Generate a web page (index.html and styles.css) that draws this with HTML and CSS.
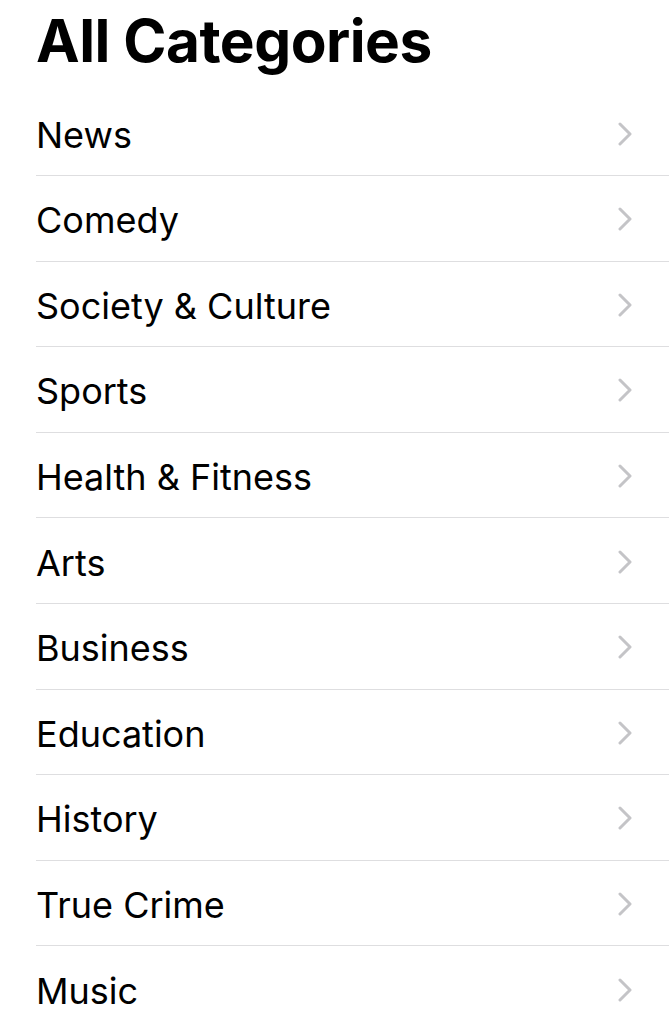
FILE: index.html
```html
<!DOCTYPE html>
<html>
<head>
    <title>All Categories</title>
    <link rel="stylesheet" href="styles.css">
</head>
<body>
    <div class="page">
        <h1 class="title">All Categories</h1>
        <ul class="category-list">
            <li class="category-item"><span>News</span><svg class="chevron" viewBox="0 0 14 24"><path d="M2 2 L12 12 L2 22"/></svg></li>
            <li class="category-item"><span>Comedy</span><svg class="chevron" viewBox="0 0 14 24"><path d="M2 2 L12 12 L2 22"/></svg></li>
            <li class="category-item"><span>Society &amp; Culture</span><svg class="chevron" viewBox="0 0 14 24"><path d="M2 2 L12 12 L2 22"/></svg></li>
            <li class="category-item"><span>Sports</span><svg class="chevron" viewBox="0 0 14 24"><path d="M2 2 L12 12 L2 22"/></svg></li>
            <li class="category-item"><span>Health &amp; Fitness</span><svg class="chevron" viewBox="0 0 14 24"><path d="M2 2 L12 12 L2 22"/></svg></li>
            <li class="category-item"><span>Arts</span><svg class="chevron" viewBox="0 0 14 24"><path d="M2 2 L12 12 L2 22"/></svg></li>
            <li class="category-item"><span>Business</span><svg class="chevron" viewBox="0 0 14 24"><path d="M2 2 L12 12 L2 22"/></svg></li>
            <li class="category-item"><span>Education</span><svg class="chevron" viewBox="0 0 14 24"><path d="M2 2 L12 12 L2 22"/></svg></li>
            <li class="category-item"><span>History</span><svg class="chevron" viewBox="0 0 14 24"><path d="M2 2 L12 12 L2 22"/></svg></li>
            <li class="category-item"><span>True Crime</span><svg class="chevron" viewBox="0 0 14 24"><path d="M2 2 L12 12 L2 22"/></svg></li>
            <li class="category-item"><span>Music</span><svg class="chevron" viewBox="0 0 14 24"><path d="M2 2 L12 12 L2 22"/></svg></li>
        </ul>
    </div>
</body>
</html>
```

FILE: styles.css
```css
body {
    margin: 0;
    background: #fff;
    font-family: Inter, "Noto Sans", sans-serif;
    color: #000;
    overflow: hidden;
}
.page {
    padding-left: 36px;
}
.title {
    margin: 0;
    padding-top: 9px;
    height: 81.4px;
    font-size: 58.5px;
    line-height: 64px;
    font-weight: 700;
    letter-spacing: -0.5px;
}
.category-list {
    list-style: none;
    margin: 0;
    padding: 0;
}
.category-item {
    display: flex;
    align-items: center;
    justify-content: space-between;
    height: 84.6px;
    padding-right: 37px;
    border-bottom: 1px solid #dedee0;
    font-size: 36px;
}
.category-item span {
    padding-top: 4px;
}
.chevron {
    width: 14px;
    height: 24px;
    margin-top: 2px;
    fill: none;
    stroke: #c4c4c7;
    stroke-width: 3;
    stroke-linecap: round;
    stroke-linejoin: round;
}
```
